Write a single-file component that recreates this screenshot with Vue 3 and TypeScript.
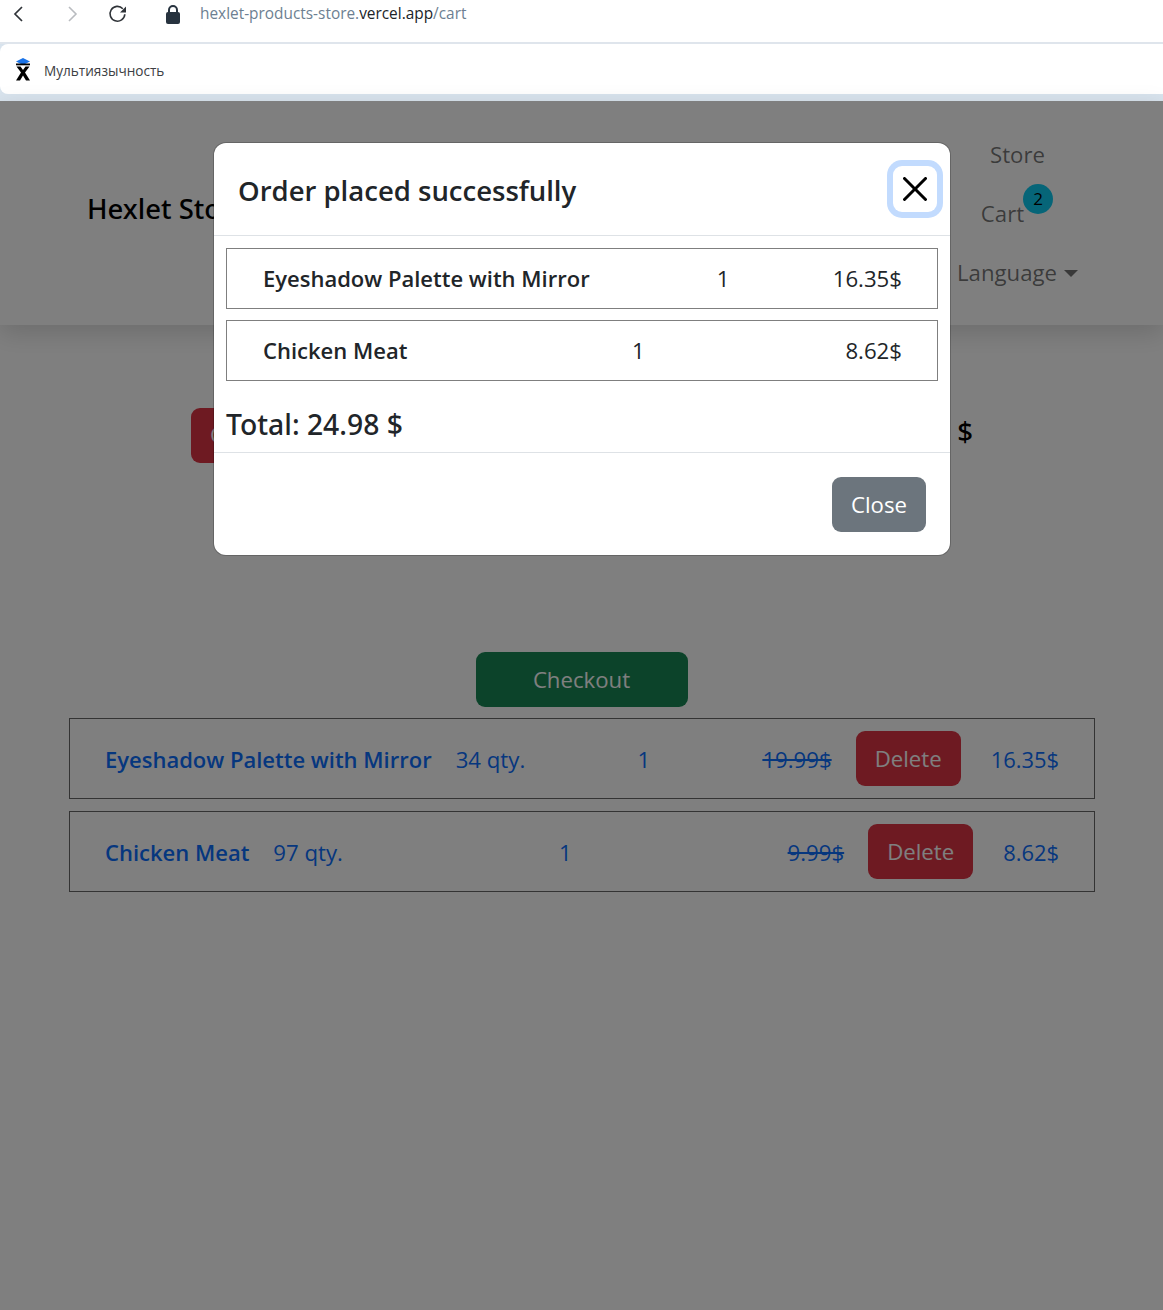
<script setup lang="ts">
interface CartRow { name: string; stock: string; qty: number; old: string; price: string }
const rows: CartRow[] = [
  { name: 'Eyeshadow Palette with Mirror', stock: '34 qty.', qty: 1, old: '19.99$', price: '16.35$' },
  { name: 'Chicken Meat', stock: '97 qty.', qty: 1, old: '9.99$', price: '8.62$' },
]
</script>

<template>
  <div class="window">
    <div class="toolbar">
      <svg class="tool back" width="14" height="18" viewBox="0 0 14 18"><path d="M11 2 4 9l7 7" fill="none" stroke="#2f3338" stroke-width="1.7" /></svg>
      <svg class="tool forward" width="14" height="18" viewBox="0 0 14 18"><path d="m3 2 7 7-7 7" fill="none" stroke="#b9bcc0" stroke-width="1.6" /></svg>
      <svg class="tool reload" width="20" height="20" viewBox="0 0 20 20"><path d="M16.800 10.200a7.400 7.400 0 1 1-2-5.500" fill="none" stroke="#2f3338" stroke-width="1.6" /><path d="M18 2.600v6h-6z" fill="#2f3338" /></svg>
      <svg class="tool lock" width="16" height="20" viewBox="0 0 16 20"><path d="M4 9V6a4 4 0 0 1 8 0v3" fill="none" stroke="#27333f" stroke-width="2" /><rect x="1" y="8" width="14" height="12" rx="2" fill="#27333f" /></svg>
      <div class="url">hexlet-products-store.<span>vercel.app</span>/cart</div>
    </div>
    <div class="bookmarks">
      <svg width="16" height="23" viewBox="0 0 16 23"><path d="M8 0 15 3.500 8 7 1 3.500z" fill="#1a73e8" /><path d="M1 5.500h14v1.800H1z" fill="#000" /><path d="M1 22.500 6 14.500 1.500 8.500h4L8 12l2.500-3.500h4L10 14.500l5 8h-4L8 17.500l-3 5z" fill="#000" /></svg>
      <span>Мультиязычность</span>
    </div>
    <div class="page">
      <header class="navbar">
        <div class="brand">Hexlet Store</div>
        <nav class="nav">
          <a>Store</a>
          <a class="nav-cart">Cart<b class="badge">2</b></a>
          <a>Language<i class="caret"></i></a>
        </nav>
      </header>
      <section class="summary">
        <button class="btn danger clear">Clear</button>
        <div class="sum">$</div>
      </section>
      <div class="checkout-wrap"><button class="btn success">Checkout</button></div>
      <ul class="list">
        <li v-for="row in rows" :key="row.name" class="row">
          <div class="group">
            <strong>{{ row.name }}</strong>
            <span>{{ row.stock }}</span>
          </div>
          <span>{{ row.qty }}</span>
          <div class="group end">
            <s>{{ row.old }}</s>
            <button class="btn danger">Delete</button>
            <span class="price">{{ row.price }}</span>
          </div>
        </li>
      </ul>
      <div class="backdrop">
        <div class="modal">
          <div class="modal-head">
            <h5>Order placed successfully</h5>
            <button class="close" aria-label="Close">
              <svg width="24" height="24" viewBox="0 0 16 16"><path d="M.293.293a1 1 0 0 1 1.414 0L8 6.586 14.293.293a1 1 0 1 1 1.414 1.414L9.414 8l6.293 6.293a1 1 0 0 1-1.414 1.414L8 9.414l-6.293 6.293a1 1 0 0 1-1.414-1.414L6.586 8 .293 1.707a1 1 0 0 1 0-1.414z" /></svg>
            </button>
          </div>
          <div class="modal-body">
            <div v-for="row in rows" :key="row.name" class="order-row">
              <strong>{{ row.name }}</strong>
              <span>{{ row.qty }}</span>
              <span>{{ row.price }}</span>
            </div>
            <div class="total">Total: 24.98 $</div>
          </div>
          <div class="modal-foot"><button class="btn secondary">Close</button></div>
        </div>
      </div>
    </div>
  </div>
</template>

<style>
html, body { margin: 0; background: #fff; }
</style>

<style scoped>
.window {
  display: flex;
  flex-direction: column;
  height: 1310px;
  overflow: hidden;
  background: #d8e3ed;
  font-family: "Open Sans", "Noto Sans", sans-serif;
  color: #212529;
}
.toolbar {
  flex: none;
  display: flex;
  align-items: center;
  height: 28px;
  padding: 0 0 14px 11px;
  background: #fff;
  border-bottom: 2px solid #dfe5ec;
}
.tool { flex: none; }
.forward { margin-left: 41px; }
.reload { margin-left: 28px; }
.lock { margin-left: 37px; }
.url {
  margin-left: 19px;
  margin-top: -1px;
  font-size: 15.4px;
  color: #6d7f92;
}
.url span { color: #202428; }
.bookmarks {
  flex: none;
  display: flex;
  align-items: center;
  gap: 13px;
  height: 50px;
  padding-left: 15px;
  background: #fff;
  border-radius: 8px 0 0 8px;
  font-size: 13.6px;
  color: #3c4043;
}
.bookmarks span { margin-top: 2px; }
.page {
  position: relative;
  flex: 1;
  margin-top: 7px;
  background: #fff;
  font-size: 22.2px;
  line-height: 36px;
}
.navbar {
  display: flex;
  justify-content: space-between;
  align-items: center;
  height: 224px;
  box-sizing: border-box;
  padding: 0 85px 0 87px;
  box-shadow: 0 8px 24px rgba(0, 0, 0, .15);
}
.brand { margin-top: -8px; font-family: "Noto Sans", sans-serif; font-size: 27.5px; font-weight: 500; color: #000; }
.nav {
  display: flex;
  flex-direction: column;
  align-items: center;
  gap: 23px;
  margin-top: 2px;
  color: rgba(0, 0, 0, .55);
}
.nav-cart { position: relative; margin-right: 30px; }
.badge {
  position: absolute;
  left: calc(100% - 1px);
  top: -12px;
  width: 30px;
  height: 30px;
  border-radius: 50%;
  background: #0dcaf0;
  color: #000;
  font-size: 17px;
  font-weight: 400;
  line-height: 30px;
  text-align: center;
}
.caret {
  display: inline-block;
  margin-left: 7px;
  vertical-align: 4px;
  border-top: 7px solid;
  border-left: 7px solid transparent;
  border-right: 7px solid transparent;
}
.summary {
  display: flex;
  justify-content: space-between;
  align-items: center;
  margin: 83px 190px 0 191px;
  height: 54px;
}
.sum { margin-top: -6px; font-family: "Noto Sans", sans-serif; font-size: 27.5px; font-weight: 500; color: #000; }
.btn {
  flex: none;
  height: 55px;
  padding: 0 19px;
  border: 0;
  border-radius: 9px;
  color: #fff;
  font: inherit;
}
.danger { background: #dc3545; }
.success { background: #198754; width: 212px; }
.secondary { background: #6c757d; }
.checkout-wrap { display: flex; justify-content: center; margin-top: 190px; }
.list {
  display: flex;
  flex-direction: column;
  gap: 12px;
  margin: 11px 68px 0 69px;
  padding: 0;
  list-style: none;
}
.row {
  display: flex;
  justify-content: space-between;
  align-items: center;
  height: 81px;
  box-sizing: border-box;
  padding: 0 35px;
  border: 1px solid rgba(0, 0, 0, .6);
  color: #0d6efd;
}
.row span, .row s { margin-top: 2px; }
.row strong { font-size: 22px; font-weight: 600; margin-right: 24px; }
.row .price { font-size: 21.9px; }
.group { display: flex; align-items: center; }
.end .btn { margin: 0 30px 0 24px; }
.backdrop {
  position: absolute;
  inset: 0;
  background: rgba(0, 0, 0, .5);
}
.modal {
  position: absolute;
  left: 214px;
  top: 42px;
  width: 736px;
  background: #fff;
  border-radius: 12px;
  overflow: hidden;
  box-shadow: 0 0 0 1px rgba(0, 0, 0, .2);
}
.modal-head {
  display: flex;
  justify-content: space-between;
  align-items: center;
  height: 93px;
  box-sizing: border-box;
  padding: 0 13px 0 24px;
  border-bottom: 1px solid #dee2e6;
}
h5 { margin: 4px 0 0; font-size: 27.5px; font-weight: 600; line-height: 36px; }
.close {
  display: flex;
  align-items: center;
  justify-content: center;
  width: 44px;
  height: 46px;
  padding: 0;
  border: 0;
  border-radius: 9px;
  background: #fff;
  box-shadow: 0 0 0 6px #c2dbfe;
}
.modal-body { padding: 12px 12px 0; }
.order-row {
  display: flex;
  justify-content: space-between;
  align-items: center;
  height: 61px;
  box-sizing: border-box;
  margin-bottom: 11px;
  padding: 0 35px 0 36px;
  border: 1px solid rgba(0, 0, 0, .5);
}
.order-row strong { font-size: 22px; font-weight: 600; margin: 0 24px 2px 0; }
.total {
  font-family: "Noto Sans", sans-serif;
  font-size: 28.3px;
  font-weight: 500;
  line-height: 36px;
  padding: 14px 0 10px;
}
.modal-foot {
  display: flex;
  justify-content: flex-end;
  height: 103px;
  box-sizing: border-box;
  padding: 24px;
  border-top: 1px solid #dee2e6;
}
</style>
